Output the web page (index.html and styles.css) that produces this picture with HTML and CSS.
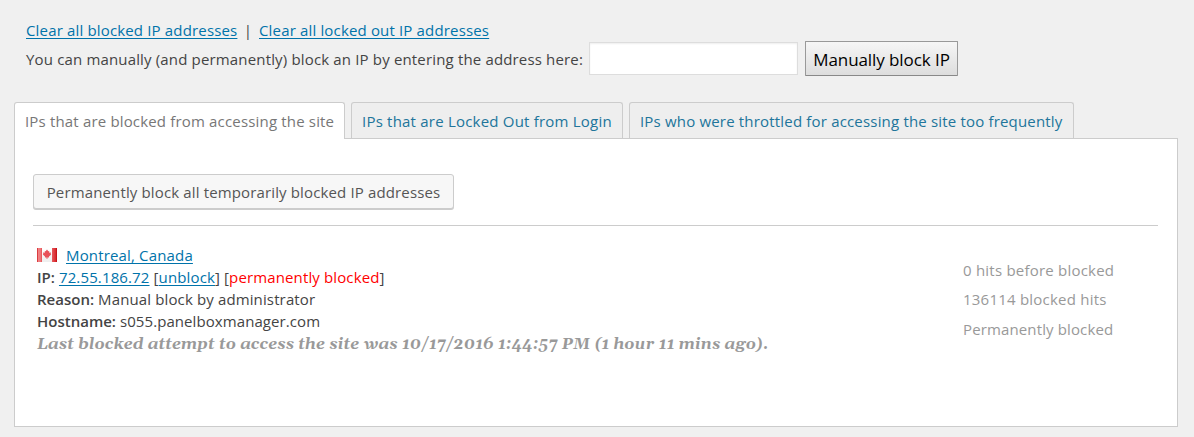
FILE: index.html
```html
<!DOCTYPE html>
<html lang="en">
<head>
<meta charset="utf-8">
<title>Blocked IPs</title>
<link rel="stylesheet" href="styles.css">
</head>
<body>
<section class="tools">
  <div class="bulk-links"><a class="clear-blocked" href="#">Clear all blocked IP addresses</a><span class="separator">|</span><a class="clear-locked" href="#">Clear all locked out IP addresses</a></div>
  <form class="manual-block">
    <label class="manual-label" for="ip">You can manually (and permanently) block an IP by entering the address here:</label>
    <input class="ip-input" id="ip" type="text">
    <button class="manual-button" type="button">Manually block IP</button>
  </form>
</section>
<nav class="tabs">
  <a class="tab tab-blocked active" href="#"><span>IPs that are blocked from accessing the site</span></a>
  <a class="tab tab-locked" href="#"><span>IPs that are Locked Out from Login</span></a>
  <a class="tab tab-throttled" href="#"><span>IPs who were throttled for accessing the site too frequently</span></a>
</nav>
<main class="panel">
  <button class="permanent-button" type="button"><span>Permanently block all temporarily blocked IP addresses</span></button>
  <div class="entry">
    <div class="details">
      <div class="line location">
        <svg class="flag" width="20" height="14" viewBox="0 0 20 14">
          <defs>
            <linearGradient id="red" x2="1"><stop offset="0" stop-color="#cf1a1f"/><stop offset=".3" stop-color="#f08082"/><stop offset=".8" stop-color="#ee7377"/><stop offset="1" stop-color="#e34448"/></linearGradient>
            <linearGradient id="red-end" x2="1"><stop offset="0" stop-color="#e55a5e"/><stop offset=".7" stop-color="#d92c31"/><stop offset="1" stop-color="#bd080e"/></linearGradient>
            <linearGradient id="white" x2="0" y2="1"><stop offset="0" stop-color="#fff"/><stop offset="1" stop-color="#eee"/></linearGradient>
          </defs>
          <path fill="url(#white)" d="M0 0h20v14H0z"/>
          <path fill="url(#red)" d="M0 0h5v14H0z"/>
          <path fill="url(#red-end)" d="M15 0h5v14h-5z"/>
          <path fill="#e8525a" d="M10 1.500l1.300 1.800.9-.2v1.600l1.800-.3-.3 1.700.5.500-2.200 2-.1.800h-1.500v1.600h-.8V9.400H8.100L8 8.600l-2.200-2 .5-.5L6 4.400l1.800.3V3.100l.9.2z"/>
        </svg>
        <a class="place" href="#">Montreal, Canada</a>
      </div>
      <div class="line ip-line"><strong>IP:</strong> <a href="#">72.55.186.72</a> [<a href="#">unblock</a>] [<span class="status">permanently blocked</span>]</div>
      <div class="line reason"><strong>Reason:</strong> Manual block by administrator</div>
      <div class="line host"><strong>Hostname:</strong> s055.panelboxmanager.com</div>
      <div class="line last-attempt">Last blocked attempt to access the site was 10/17/2016 1:44:57 PM (1 hour 11 mins ago).</div>
    </div>
    <div class="hits">
      <div class="before">0 hits before blocked</div>
      <div class="count">136114 blocked hits</div>
      <div class="duration">Permanently blocked</div>
    </div>
  </div>
</main>
</body>
</html>
```
FILE: styles.css
```css
* { box-sizing: border-box; }
body { margin: 0; padding: 19px 16px 10px 14px; height: 437px; background: #f0f0f0; color: #444; font: 15px/22px "Open Sans", "Noto Sans", sans-serif; letter-spacing: .16px; white-space: nowrap; overflow: hidden; }
a { color: #0073aa; text-underline-offset: 2px; text-decoration-thickness: 1px; text-decoration-skip-ink: none; }
.tools { padding-left: 12px; height: 83px; }
.bulk-links { display: flex; height: 21px; }
.clear-blocked { width: 211px; }
.separator { width: 22px; text-align: center; }
.manual-block { display: flex; align-items: center; height: 36px; }
.manual-label { width: 563px; padding-top: 2px; }
.ip-input { width: 209px; height: 33px; margin: 0 7px 0 0; border: 1px solid #ddd; background: #fff; box-shadow: inset 0 1px 2px rgba(0,0,0,.07); }
.manual-button { width: 153px; height: 35px; padding: 3px 0 0; border: 1px solid #999; border-bottom-color: #888; border-radius: 1px; background: linear-gradient(#f6f6f6, #ddd); color: #000; font: 17px/24px "Open Sans", sans-serif; letter-spacing: -.08px; }
.tabs { display: flex; gap: 6px; height: 36px; }
.tab { height: 36px; padding-left: 10px; border: 1px solid #ccc; border-bottom: 0; border-radius: 3px 3px 0 0; background: #eee; color: #21759b; text-decoration: none; line-height: 37px; }
.tab-blocked { width: 331px; letter-spacing: .17px; }
.tab-locked { width: 272px; letter-spacing: .21px; }
.tab-throttled { width: 445px; letter-spacing: .18px; }
.tab.active { height: 37px; background: #fff; color: #777; z-index: 1; }
.panel { height: 289px; padding: 35px 19px 0 18px; border: 1px solid #ccc; background: #fff; }
.permanent-button { display: block; width: 421px; height: 35px; padding: 1px 0 0; border: 1px solid #ccc; border-radius: 3px; background: #f7f7f7; color: #555; box-shadow: 0 1px 0 #ccc; font: 15px/22px "Open Sans", sans-serif; letter-spacing: .14px; }
.entry { display: flex; margin-top: 16px; padding: 18px 0 0 4px; border-top: 1px solid #ccc; }
.details { width: 926px; }
.line { height: 22px; }
.location { display: flex; align-items: center; gap: 9px; }
.ip-line, .reason { letter-spacing: .13px; }
.host { letter-spacing: .08px; }
strong { font-weight: 600; letter-spacing: 0; }
.status { color: #f00; }
.last-attempt { color: #999; font: italic bold 16px/24px Gelasio, Georgia, "DejaVu Serif", serif; letter-spacing: .12px; }
.hits { padding-top: 15px; color: #999; }
.hits div { height: 29px; }
.hits .count { height: 30px; }
.before, .count { letter-spacing: .22px; }
.duration { letter-spacing: .13px; }
```
